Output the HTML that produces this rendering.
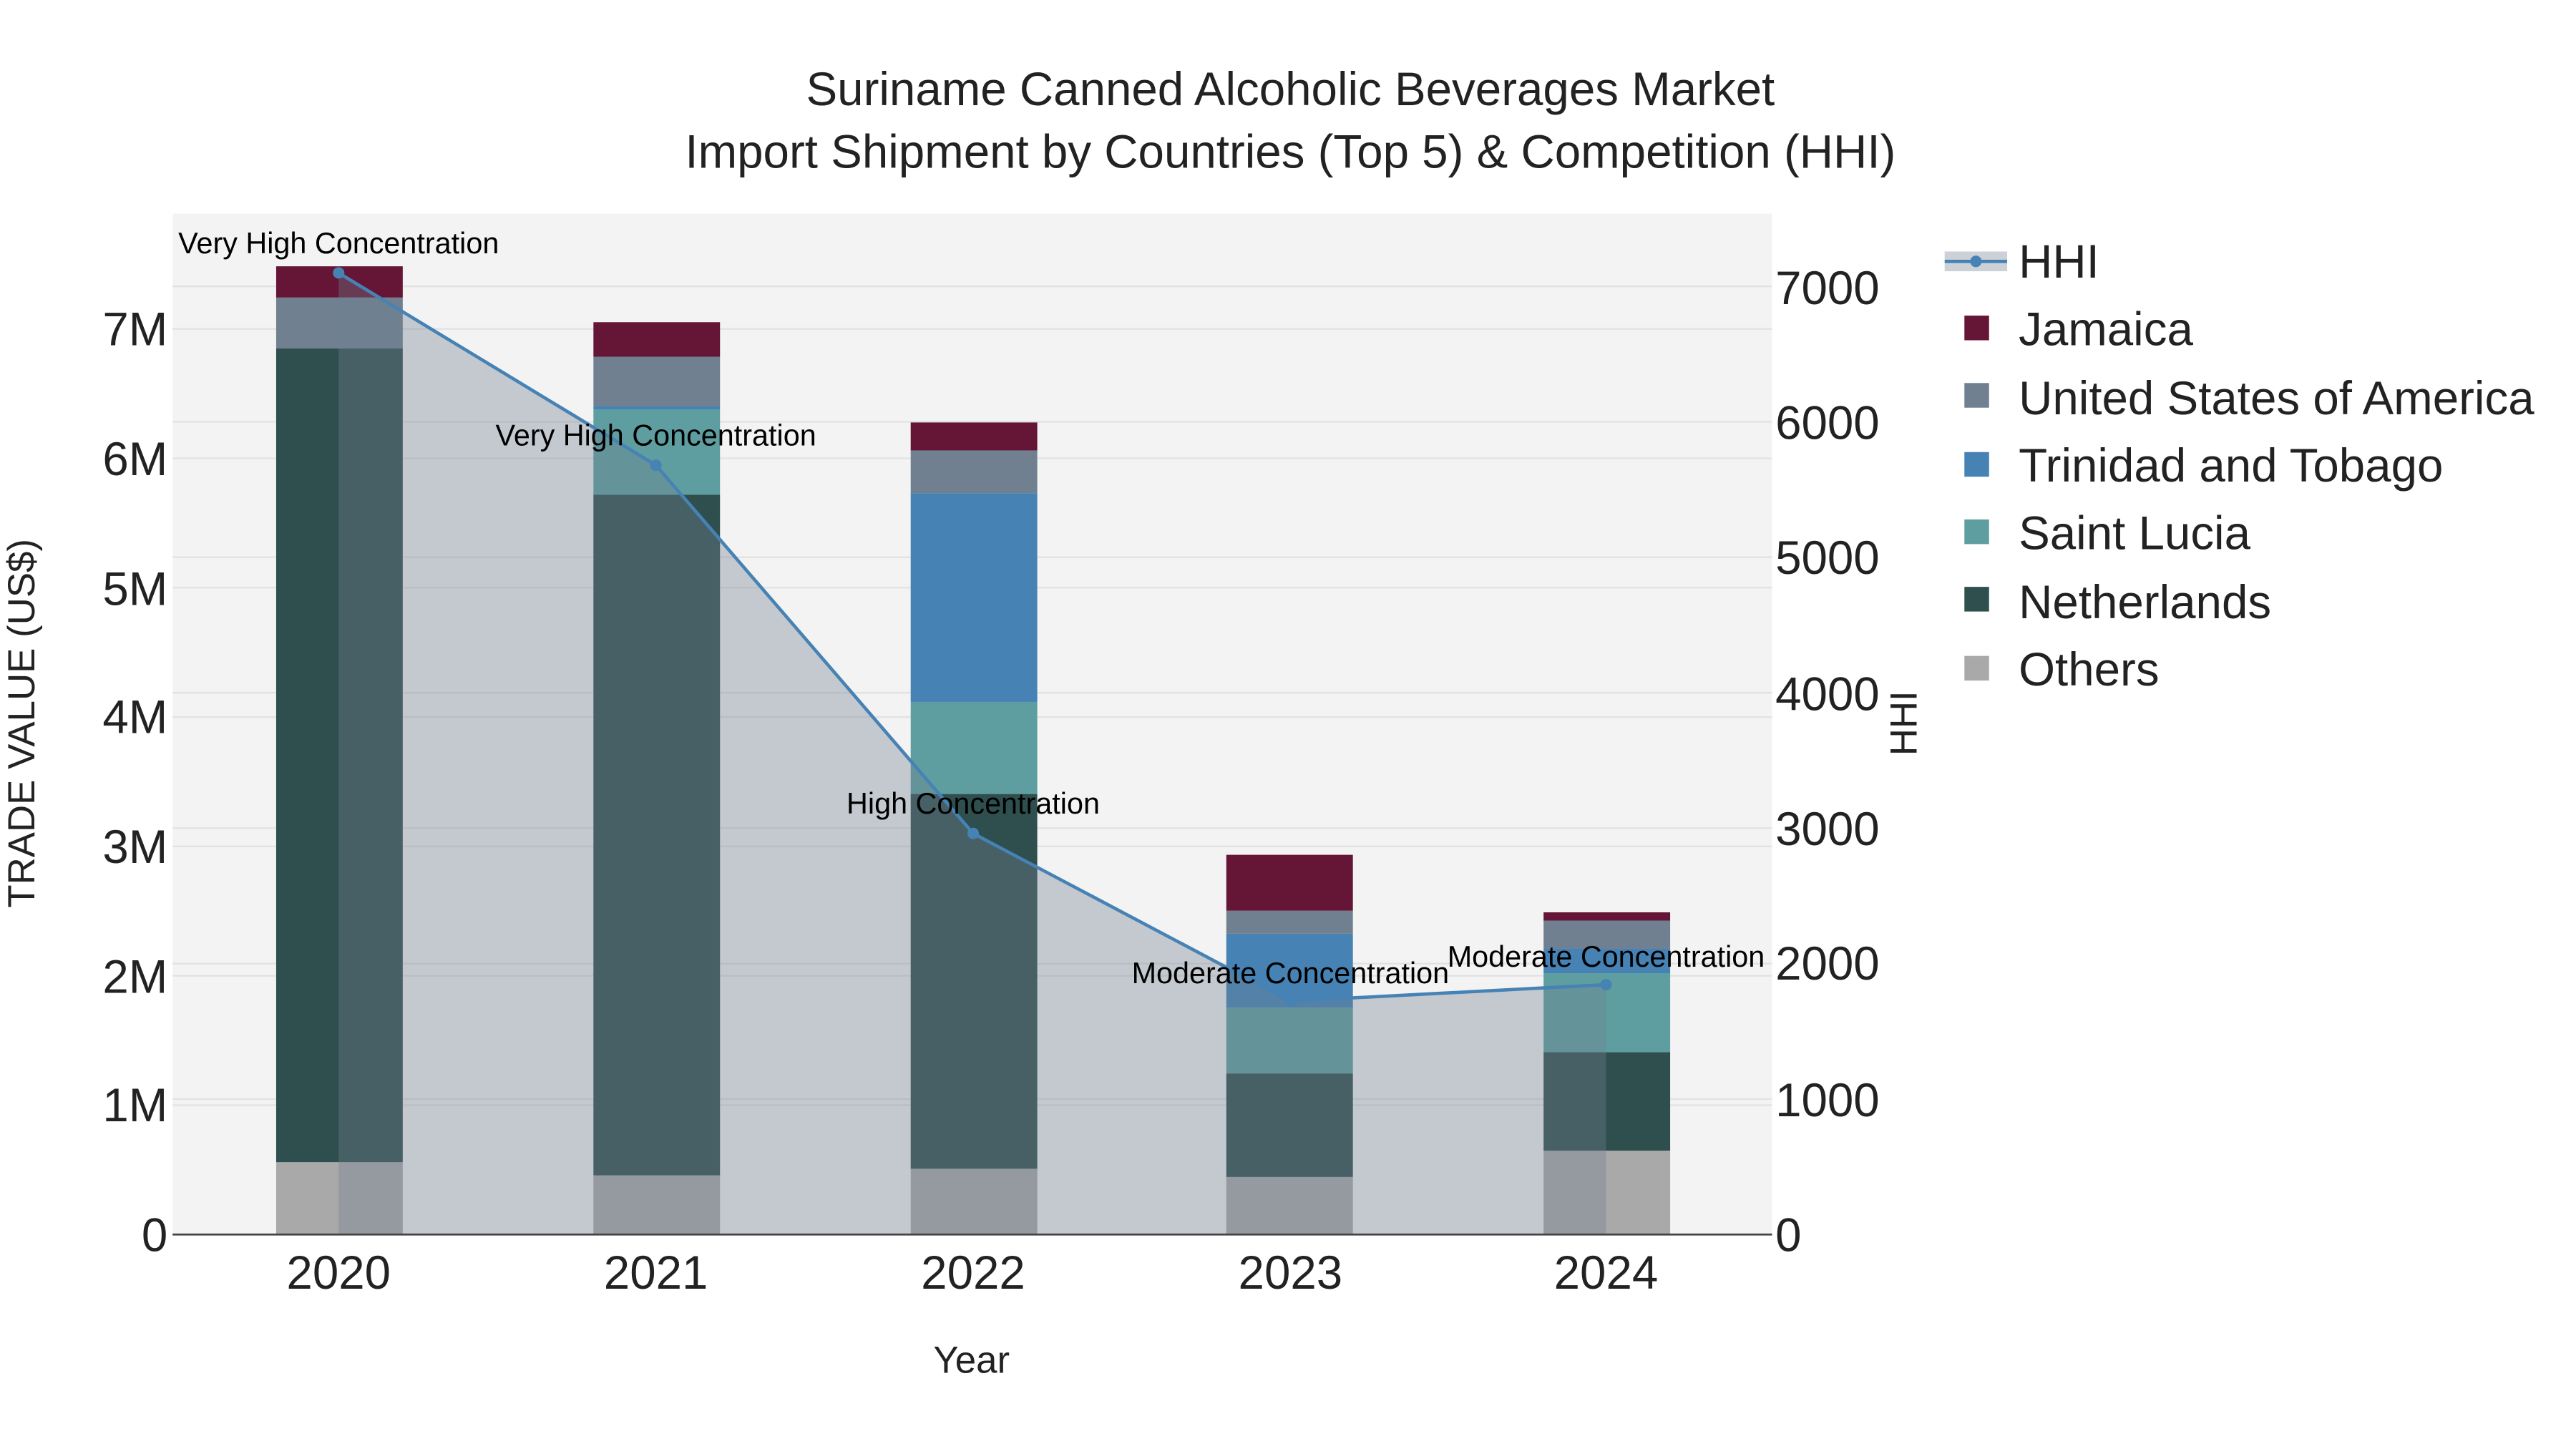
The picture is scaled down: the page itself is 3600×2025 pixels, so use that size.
<!DOCTYPE html>
<html><head><meta charset="utf-8"><style>html,body{margin:0;padding:0;background:#fff}svg{display:block}</style></head>
<body>
<svg width="3600" height="2025" viewBox="0 0 1560 877.5" xmlns="http://www.w3.org/2000/svg" font-family="Liberation Sans, sans-serif">
<rect width="1560" height="877.5" fill="#fff"/>
<g transform="scale(0.9955)">
<rect x="105" y="130" width="973" height="621" fill="#f3f3f3"/>
<g stroke="#e2e2e2" stroke-width="1">
<line x1="105" x2="1078" y1="672.3" y2="672.3"/><line x1="105" x2="1078" y1="593.6" y2="593.6"/><line x1="105" x2="1078" y1="514.9" y2="514.9"/><line x1="105" x2="1078" y1="436.2" y2="436.2"/><line x1="105" x2="1078" y1="357.5" y2="357.5"/><line x1="105" x2="1078" y1="278.8" y2="278.8"/><line x1="105" x2="1078" y1="200.1" y2="200.1"/>
<line x1="105" x2="1078" y1="668.6" y2="668.6"/><line x1="105" x2="1078" y1="586.2" y2="586.2"/><line x1="105" x2="1078" y1="503.8" y2="503.8"/><line x1="105" x2="1078" y1="421.4" y2="421.4"/><line x1="105" x2="1078" y1="339" y2="339"/><line x1="105" x2="1078" y1="256.6" y2="256.6"/><line x1="105" x2="1078" y1="174.2" y2="174.2"/>
</g>
<g>
<rect x="168" y="707" width="77" height="44" fill="#a9a9a9"/>
<rect x="168" y="212" width="77" height="495" fill="#2f4f4f"/>
<rect x="168" y="181" width="77" height="31" fill="#708090"/>
<rect x="168" y="162" width="77" height="19" fill="#651535"/>

<rect x="361" y="715" width="77" height="36" fill="#a9a9a9"/>
<rect x="361" y="301" width="77" height="414" fill="#2f4f4f"/>
<rect x="361" y="249" width="77" height="52" fill="#5f9ea0"/>
<rect x="361" y="247" width="77" height="2" fill="#4682b4"/>
<rect x="361" y="217" width="77" height="30" fill="#708090"/>
<rect x="361" y="196" width="77" height="21" fill="#651535"/>

<rect x="554" y="711" width="77" height="40" fill="#a9a9a9"/>
<rect x="554" y="483" width="77" height="228" fill="#2f4f4f"/>
<rect x="554" y="427" width="77" height="56" fill="#5f9ea0"/>
<rect x="554" y="300" width="77" height="127" fill="#4682b4"/>
<rect x="554" y="274" width="77" height="26" fill="#708090"/>
<rect x="554" y="257" width="77" height="17" fill="#651535"/>

<rect x="746" y="716" width="77" height="35" fill="#a9a9a9"/>
<rect x="746" y="653" width="77" height="63" fill="#2f4f4f"/>
<rect x="746" y="613" width="77" height="40" fill="#5f9ea0"/>
<rect x="746" y="568" width="77" height="45" fill="#4682b4"/>
<rect x="746" y="554" width="77" height="14" fill="#708090"/>
<rect x="746" y="520" width="77" height="34" fill="#651535"/>

<rect x="939" y="700" width="77" height="51" fill="#a9a9a9"/>
<rect x="939" y="640" width="77" height="60" fill="#2f4f4f"/>
<rect x="939" y="592" width="77" height="48" fill="#5f9ea0"/>
<rect x="939" y="577" width="77" height="15" fill="#4682b4"/>
<rect x="939" y="560" width="77" height="17" fill="#708090"/>
<rect x="939" y="555" width="77" height="5" fill="#651535"/>
</g>
<polygon points="206,751 206,166 399,283 592,507 785,609 977,599 977,751" fill="rgba(112,128,144,0.36)"/>
<polyline points="206,166 399,283 592,507 785,609 977,599" fill="none" stroke="#4682b4" stroke-width="2"/>
<g fill="#4682b4"><circle cx="206" cy="166" r="3.5"/><circle cx="399" cy="283" r="3.5"/><circle cx="592" cy="507" r="3.5"/><circle cx="785" cy="609" r="3.5"/><circle cx="977" cy="599" r="3.5"/></g>
<line x1="105" x2="1078" y1="751" y2="751" stroke="#444" stroke-width="1.2"/>
<g font-size="18" fill="#000" text-anchor="middle">
<text x="206" y="154">Very High Concentration</text>
<text x="399" y="271">Very High Concentration</text>
<text x="592" y="495">High Concentration</text>
<text x="785" y="598">Moderate Concentration</text>
<text x="977" y="588">Moderate Concentration</text>
</g>
<g font-size="28.5" fill="#222" text-anchor="middle">
<text x="785" y="64">Suriname Canned Alcoholic Beverages Market</text>
<text x="785" y="102">Import Shipment by Countries (Top 5) &amp; Competition (HHI)</text>
</g>
<g font-size="28.5" fill="#222" text-anchor="end">
<text x="102" y="761">0</text><text x="102" y="682">1M</text><text x="102" y="604">2M</text><text x="102" y="525">3M</text><text x="102" y="446">4M</text><text x="102" y="368">5M</text><text x="102" y="289">6M</text><text x="102" y="210">7M</text>
</g>
<g font-size="28.5" fill="#222" text-anchor="start">
<text x="1080" y="761">0</text><text x="1080" y="679">1000</text><text x="1080" y="596">2000</text><text x="1080" y="514">3000</text><text x="1080" y="432">4000</text><text x="1080" y="349">5000</text><text x="1080" y="267">6000</text><text x="1080" y="185">7000</text>
</g>
<g font-size="28.5" fill="#222" text-anchor="middle">
<text x="206" y="784">2020</text><text x="399" y="784">2021</text><text x="592" y="784">2022</text><text x="785" y="784">2023</text><text x="977" y="784">2024</text>
</g>
<text x="591" y="835" font-size="23" fill="#222" text-anchor="middle">Year</text>
<text transform="translate(21,440) rotate(-90)" font-size="23" fill="#222" text-anchor="middle">TRADE VALUE (US$)</text>
<text transform="translate(1166,440) rotate(-90)" font-size="23" fill="#222" text-anchor="middle">HHI</text>
<rect x="1183" y="153" width="38" height="12" fill="rgba(112,128,144,0.36)"/>
<line x1="1183" x2="1221" y1="159" y2="159" stroke="#4682b4" stroke-width="2"/>
<circle cx="1202" cy="159" r="3.5" fill="#4682b4"/>
<g>
<rect x="1195" y="192" width="15" height="15" fill="#651535"/>
<rect x="1195" y="233" width="15" height="15" fill="#708090"/>
<rect x="1195" y="275" width="15" height="15" fill="#4682b4"/>
<rect x="1195" y="316" width="15" height="15" fill="#5f9ea0"/>
<rect x="1195" y="357" width="15" height="15" fill="#2f4f4f"/>
<rect x="1195" y="399" width="15" height="15" fill="#a9a9a9"/>
</g>
<g font-size="28.5" fill="#222">
<text x="1228" y="169">HHI</text>
<text x="1228" y="210">Jamaica</text>
<text x="1228" y="252">United States of America</text>
<text x="1228" y="293">Trinidad and Tobago</text>
<text x="1228" y="334">Saint Lucia</text>
<text x="1228" y="376">Netherlands</text>
<text x="1228" y="417">Others</text>
</g>
</g>
</svg>
</body></html>
